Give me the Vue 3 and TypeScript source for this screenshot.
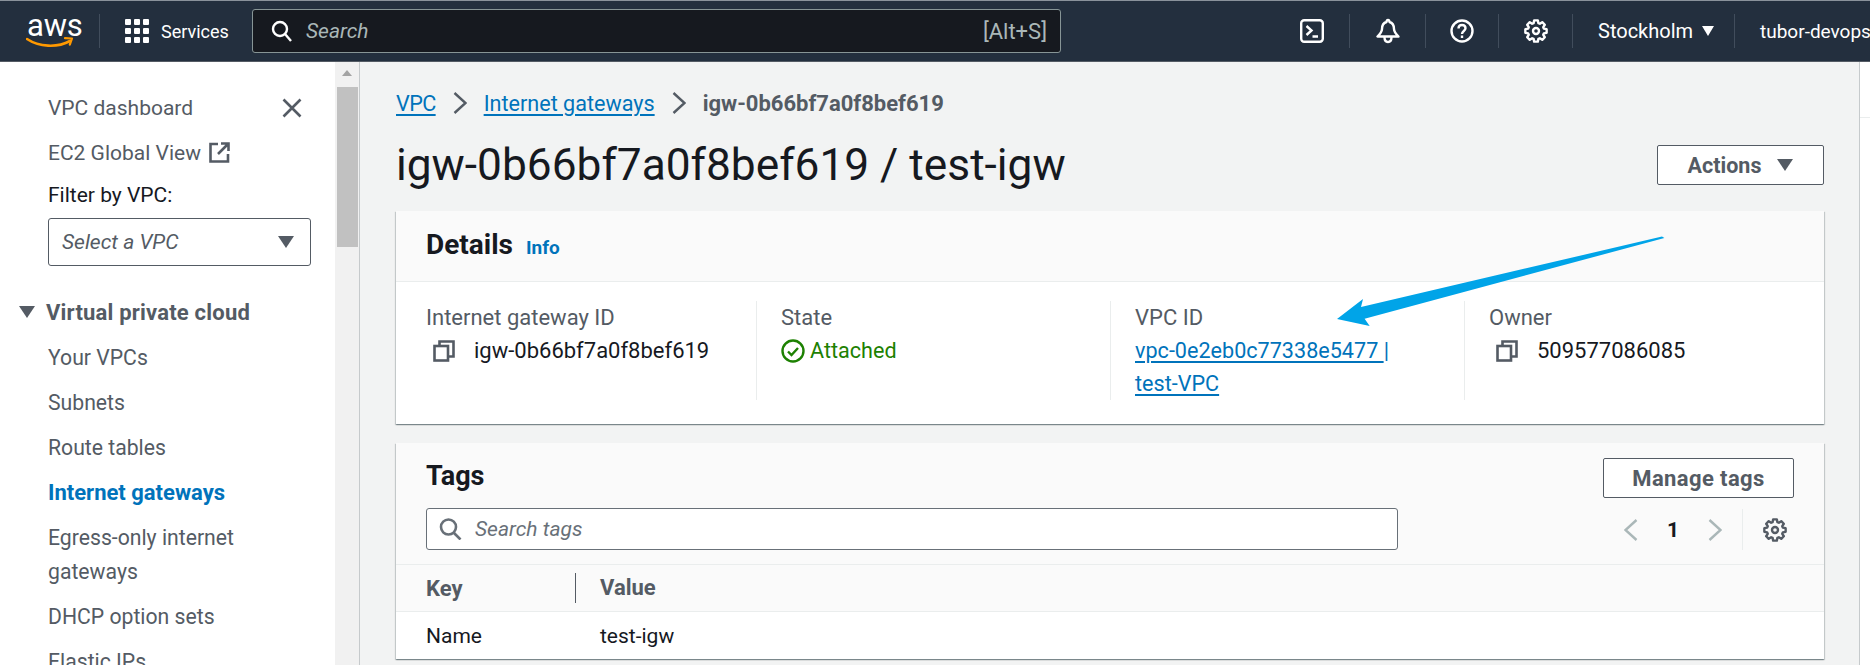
<template>
  <div class="page">
    <header class="nav">
      <div class="logo">
        <span class="logo-text">aws</span>
        <svg class="smile" width="48" height="12" viewBox="0 0 48 12" fill="none">
          <path d="M1 2c12 8 30 9 43 2" stroke="#ff9900" stroke-width="2.6" stroke-linecap="round" />
          <path d="M39 1.200l7 .3-2.200 6.200" stroke="#ff9900" stroke-width="2.200" stroke-linecap="round" stroke-linejoin="round" />
        </svg>
      </div>
      <i class="nav-div"></i>
      <div class="services">
        <svg width="24" height="24" viewBox="0 0 24 24" fill="#fff">
          <template v-for="y in [0, 9, 18]" :key="y">
            <rect v-for="x in [0, 9, 18]" :key="x" :x="x" :y="y" width="6" height="6" rx="1" />
          </template>
        </svg>
        <span>Services</span>
      </div>
      <div class="search">
        <svg width="22" height="22" viewBox="0 0 22 22" fill="none" stroke="#fff" stroke-width="2.400">
          <circle cx="9" cy="9" r="7" />
          <path d="M14 14l6 7" />
        </svg>
        <span class="search-ph">Search</span>
        <span class="search-key">[Alt+S]</span>
      </div>
      <div class="nav-icon ic-term">
        <svg width="24" height="24" viewBox="0 0 24 24" fill="none" stroke="#fff" stroke-width="2.400">
          <rect x="1.200" y="1.200" width="21.600" height="21.600" rx="3" />
          <path d="M6.500 7l5 4.500-5 4.500M12.500 17.500h5.500" />
        </svg>
      </div>
      <i class="nav-div"></i>
      <div class="nav-icon ic-bell">
        <svg width="24" height="26" viewBox="0 0 24 26" fill="none" stroke="#fff" stroke-width="2.400" stroke-linejoin="round">
          <path d="M12 2c-1 0-1.400 1-1.500 2C7 5 6 8 6 11c0 3-2 5-4.500 7.500h21C20 16 18 14 18 11c0-3-1-6-4.500-7C13.400 3 13 2 12 2z" />
          <path d="M8.500 19c0 3 1.500 5 3.500 5s3.500-2 3.500-5" />
        </svg>
      </div>
      <i class="nav-div"></i>
      <div class="nav-icon ic-help">
        <svg width="24" height="24" viewBox="0 0 24 24" fill="none" stroke="#fff" stroke-width="2.400">
          <circle cx="12" cy="12" r="10.500" />
          <path d="M8.500 9.500c0-2.200 1.500-3.500 3.500-3.500s3.500 1.300 3.500 3.300c0 2.700-3.500 2.700-3.500 5.700" />
          <path d="M12 16.500v2.500" />
        </svg>
      </div>
      <i class="nav-div"></i>
      <div class="nav-icon">
        <svg width="24" height="24" viewBox="0 0 24 24" fill="none" stroke="#fff" stroke-width="2.400" stroke-linejoin="round">
          <path :d="gearPath" />
          <circle cx="12" cy="12" r="3" />
        </svg>
      </div>
      <i class="nav-div"></i>
      <div class="region">
        <span>Stockholm</span>
        <i class="caret caret-white"></i>
      </div>
      <i class="nav-div"></i>
      <span class="account">tubor-devops</span>
    </header>

    <div class="body">
      <aside class="side">
        <div class="side-row">
          <span>VPC dashboard</span>
          <svg class="side-close" width="20" height="20" viewBox="0 0 20 20" stroke="#545b64" stroke-width="2.600">
            <path d="M1.500 1.500l17 17M18.500 1.500l-17 17" />
          </svg>
        </div>
        <div class="side-row">
          <span>EC2 Global View</span>
          <svg class="ext" width="21" height="21" viewBox="0 0 21 21" fill="none" stroke="#545b64" stroke-width="2.600">
            <path d="M9 2H1.500v17.500H19V12M12 1.500h7.500V9M19 2L9 12" />
          </svg>
        </div>
        <div class="filter-label">Filter by VPC:</div>
        <div class="select">
          <span>Select a VPC</span>
          <i class="caret"></i>
        </div>
        <div class="side-group">
          <i class="caret"></i>
          <span>Virtual private cloud</span>
        </div>
        <ul class="side-list">
          <li v-for="item in sideItems" :key="item" :class="{ active: item === 'Internet gateways' }">{{ item }}</li>
        </ul>
      </aside>

      <div class="scrollbar">
        <i class="scroll-up"></i>
        <div class="scroll-thumb"></div>
      </div>

      <main class="main">
        <nav class="crumbs">
          <a class="crumb-vpc">VPC</a>
          <svg width="14" height="22" viewBox="0 0 14 22" fill="none" stroke="#545b64" stroke-width="2.400"><path d="M1.500 1l11 10-11 10" /></svg>
          <a>Internet gateways</a>
          <svg width="14" height="22" viewBox="0 0 14 22" fill="none" stroke="#545b64" stroke-width="2.400"><path d="M1.500 1l11 10-11 10" /></svg>
          <b>igw-0b66bf7a0f8bef619</b>
        </nav>

        <div class="title-row">
          <h1>igw-0b66bf7a0f8bef619 / test-igw</h1>
          <button class="btn btn-actions">Actions <i class="caret"></i></button>
        </div>

        <section class="card">
          <div class="card-head">
            <h2 class="h-details">Details</h2>
            <a class="info">Info</a>
          </div>
          <div class="details">
            <div class="col">
              <div class="lbl">Internet gateway ID</div>
              <div class="val">
                <svg class="copy" width="22" height="22" viewBox="0 0 22 22" fill="none" stroke="#545b64" stroke-width="2.600">
                  <path d="M6.500 6V1.500h14v15H15" />
                  <rect x="1.500" y="6" width="13.500" height="14.500" />
                </svg>
                <span>igw-0b66bf7a0f8bef619</span>
              </div>
            </div>
            <div class="col">
              <div class="lbl">State</div>
              <div class="val val-ok">
                <svg width="24" height="24" viewBox="0 0 24 24" fill="none" stroke="#1d8102" stroke-width="2.400">
                  <circle cx="12" cy="12" r="10.500" />
                  <path d="M7 12.500l3.500 3.500 6.500-7" />
                </svg>
                <span>Attached</span>
              </div>
            </div>
            <div class="col">
              <div class="lbl">VPC ID</div>
              <div class="val-link"><a>vpc-0e2eb0c77338e5477 </a> |<br /><a>test-VPC</a></div>
            </div>
            <div class="col">
              <div class="lbl">Owner</div>
              <div class="val">
                <svg class="copy" width="22" height="22" viewBox="0 0 22 22" fill="none" stroke="#545b64" stroke-width="2.600">
                  <path d="M6.500 6V1.500h14v15H15" />
                  <rect x="1.500" y="6" width="13.500" height="14.500" />
                </svg>
                <span>509577086085</span>
              </div>
            </div>
          </div>
          <svg class="arrow" width="340" height="100" viewBox="0 0 340 100">
            <path d="M7 88L33 68 31 76 332 5.500 334.400 7 34.600 87.700 39.700 95z" fill="#00a4e8" />
          </svg>
        </section>

        <section class="card card-tags">
          <div class="tags-top">
            <div class="tags-left">
              <h2>Tags</h2>
              <div class="tag-search">
                <svg width="23" height="22" viewBox="0 0 23 22" fill="none" stroke="#687078" stroke-width="2.600">
                  <circle cx="9.500" cy="9" r="7.500" />
                  <path d="M15 15l6.500 6.500" />
                </svg>
                <span>Search tags</span>
              </div>
            </div>
            <div class="tags-right">
              <button class="btn btn-manage">Manage tags</button>
              <div class="pager">
                <svg width="14" height="22" viewBox="0 0 14 22" fill="none" stroke="#aab7b8" stroke-width="2.400"><path d="M12.500 1l-11 10 11 10" /></svg>
                <b>1</b>
                <svg width="14" height="22" viewBox="0 0 14 22" fill="none" stroke="#aab7b8" stroke-width="2.400"><path d="M1.500 1l11 10-11 10" /></svg>
                <i class="pager-div"></i>
                <svg width="24" height="24" viewBox="0 0 24 24" fill="none" stroke="#545b64" stroke-width="2.400" stroke-linejoin="round">
                  <path :d="gearPath" />
                  <circle cx="12" cy="12" r="3" />
                </svg>
              </div>
            </div>
          </div>
          <div class="t-head">
            <span class="t-key">Key</span>
            <span class="t-val">Value</span>
          </div>
          <div class="t-row">
            <span class="t-key">Name</span>
            <span class="t-val">test-igw</span>
          </div>
        </section>
      </main>

      <div class="right-strip"><i></i></div>
    </div>
  </div>
</template>

<script setup lang="ts">
const sideItems: string[] = [
  'Your VPCs',
  'Subnets',
  'Route tables',
  'Internet gateways',
  'Egress-only internet gateways',
  'DHCP option sets',
  'Elastic IPs',
];

// 8-tooth gear outline shared by the nav bar and the table preferences
function makeGear(): string {
  const pts: string[] = [];
  const teeth = 8;
  for (let i = 0; i < teeth; i++) {
    const a = (i / teeth) * Math.PI * 2;
    const offsets: [number, number][] = [
      [-0.3, 8.2],
      [-0.17, 10.8],
      [0.17, 10.8],
      [0.3, 8.2],
    ];
    for (const [da, r] of offsets) {
      const x = 12 + r * Math.cos(a + da);
      const y = 12 + r * Math.sin(a + da);
      pts.push(`${x.toFixed(2)} ${y.toFixed(2)}`);
    }
  }
  return `M${pts.join('L')}Z`;
}

const gearPath = makeGear();
</script>

<style>
html,
body {
  margin: 0;
  background: #fff;
  overflow: hidden;
}
</style>

<style scoped>
.page {
  width: 1870px;
  height: 665px;
  overflow: hidden;
  font-family: Roboto, 'Noto Sans', sans-serif;
  font-size: 21px;
  color: #16191f;
  display: flex;
  flex-direction: column;
}
a {
  color: #0073bb;
  text-decoration: underline;
  text-underline-offset: 3px;
}
i {
  display: block;
  font-style: normal;
}

/* top bar */
.nav {
  height: 62px;
  flex: none;
  box-sizing: border-box;
  background: #232f3e;
  border-top: 1px solid #8a929b;
  border-bottom: 1px solid #545b64;
  display: flex;
  align-items: center;
  color: #fff;
  font-size: 19px;
}
.nav > * {
  flex: none;
}
.logo {
  width: 46px;
  margin-left: 27px;
  margin-right: 26px;
  height: 34px;
  position: relative;
}
.logo-text {
  display: block;
  font-size: 31px;
  line-height: 24px;
  letter-spacing: -0.2px;
  text-align: center;
}
.smile {
  position: absolute;
  left: -1px;
  top: 23px;
}
.nav-div {
  width: 1px;
  height: 34px;
  background: #414d5c;
}
.services {
  display: flex;
  align-items: center;
  gap: 12px;
  margin-left: 25px;
  width: 127px;
  font-size: 18px;
}
.search {
  width: 809px;
  height: 44px;
  box-sizing: border-box;
  background: #16191f;
  border: 1px solid #879596;
  border-radius: 3px;
  display: flex;
  align-items: center;
  padding: 0 13px 0 18px;
}
.search-ph {
  font-style: italic;
  color: #aab7b8;
  margin-left: 13px;
  font-size: 21px;
}
.search-key {
  margin-left: auto;
  color: #aab7b8;
  font-size: 22px;
}
.nav-icon {
  width: 73px;
  display: flex;
  justify-content: center;
}
.ic-term {
  width: 74px;
  margin-left: 214px;
}
.ic-bell {
  width: 75px;
}
.ic-help {
  width: 72px;
}
.region {
  display: flex;
  align-items: center;
  gap: 9px;
  padding-left: 25px;
  width: 161px;
  box-sizing: border-box;
  font-size: 20px;
}
.account {
  margin-left: 25px;
  white-space: nowrap;
}
.caret {
  width: 0;
  height: 0;
  border-left: 8px solid transparent;
  border-right: 8px solid transparent;
  border-top: 12px solid #545b64;
  flex: none;
}
.caret-white {
  border-left-width: 6px;
  border-right-width: 6px;
  border-top: 10px solid #fff;
}

.body {
  flex: 1;
  display: flex;
  min-height: 0;
}

/* side navigation */
.side {
  width: 335px;
  flex: none;
  box-sizing: border-box;
  padding: 23px 24px 0 48px;
  color: #545b64;
  background: #fff;
}
.side-row {
  height: 45px;
  display: flex;
  align-items: center;
  white-space: nowrap;
}
.side-close {
  margin-left: auto;
  margin-right: 9px;
}
.ext {
  margin-left: 8px;
}
.filter-label {
  height: 40px;
  line-height: 40px;
  color: #16191f;
}
.select {
  width: 263px;
  height: 48px;
  margin-top: 3px;
  box-sizing: border-box;
  border: 1px solid #545b64;
  border-radius: 3px;
  display: flex;
  align-items: center;
  justify-content: space-between;
  padding: 0 16px 0 13px;
  font-style: italic;
}
.side-group {
  display: flex;
  align-items: center;
  gap: 11px;
  margin: 29px 0 0 -29px;
  font-weight: 700;
  font-size: 22px;
  letter-spacing: 0.2px;
  height: 34px;
  white-space: nowrap;
}
.side-list {
  list-style: none;
  margin: 12px 0 0;
  padding: 0;
  display: flex;
  flex-direction: column;
  gap: 11px;
  line-height: 34px;
  font-size: 21.200px;
}
.side-list .active {
  color: #0073bb;
  font-weight: 700;
  font-size: 22px;
}

.scrollbar {
  width: 25px;
  flex: none;
  background: #f1f1f1;
  border-right: 1px solid #c6cacc;
  box-sizing: border-box;
  padding: 8px 2px 0;
  display: flex;
  flex-direction: column;
  align-items: center;
}
.scroll-up {
  width: 0;
  height: 0;
  border-left: 5px solid transparent;
  border-right: 5px solid transparent;
  border-bottom: 6px solid #a3a3a3;
}
.scroll-thumb {
  width: 21px;
  height: 160px;
  background: #c1c1c1;
  margin-top: 11px;
}

/* main content */
.main {
  width: 1500px;
  flex: none;
  box-sizing: border-box;
  background: #f2f3f3;
  border-right: 1px solid #c6cacc;
  padding: 0 35px 0 36px;
}
.crumbs {
  height: 82px;
  display: flex;
  align-items: center;
  font-size: 21.600px;
}
.crumb-vpc {
  letter-spacing: -0.6px;
}
.crumbs svg {
  margin: 0 17px;
}
.crumbs b {
  color: #545b64;
  font-size: 22px;
}
.title-row {
  display: flex;
  align-items: center;
  justify-content: space-between;
  height: 42px;
}
h1 {
  margin: 0;
  font-size: 44.250px;
  font-weight: 400;
  white-space: nowrap;
}
h2 {
  margin: 0;
  font-size: 27px;
  font-weight: 700;
}
.btn {
  height: 40px;
  box-sizing: border-box;
  border: 1px solid #545b64;
  border-radius: 2px;
  background: #fff;
  color: #545b64;
  font: 700 21.500px Roboto, 'Noto Sans', sans-serif;
  display: flex;
  align-items: center;
  justify-content: center;
}
.btn-actions {
  width: 167px;
  gap: 16px;
}
.btn-manage {
  width: 191px;
  font-size: 22px;
  letter-spacing: 0.4px;
}
.card {
  position: relative;
  background: #fff;
  box-shadow: 0 1px 1px 0 rgba(0, 28, 36, 0.3), 1px 1px 1px 0 rgba(0, 28, 36, 0.15), -1px 1px 1px 0 rgba(0, 28, 36, 0.15);
  margin-top: 25px;
  height: 213px;
}
.card-head {
  height: 71px;
  box-sizing: border-box;
  background: #fafafa;
  border-bottom: 1px solid #eaeded;
  display: flex;
  align-items: center;
  padding: 0 0 4px 30px;
  gap: 13px;
}
.h-details {
  font-size: 28px;
}
.info {
  font-size: 19px;
  font-weight: 700;
  text-decoration: none;
  margin-top: 6px;
}
.details {
  display: grid;
  grid-template-columns: repeat(4, 354px);
  padding: 19px 0 0 6px;
  font-size: 22px;
}
.col {
  height: 99px;
  box-sizing: border-box;
  padding-left: 24px;
  border-left: 1px solid #eaeded;
}
.col:first-child {
  border-left: 0;
  padding-left: 25px;
  margin-left: -1px;
}
.lbl {
  color: #545b64;
  height: 33px;
  line-height: 33px;
}
.val {
  display: flex;
  align-items: center;
  height: 33px;
}
.copy {
  margin: 0 19px 0 7px;
}
.val-ok {
  color: #1d8102;
  gap: 5px;
  font-size: 21.600px;
}
.val-link {
  line-height: 33px;
  color: #0073bb;
  font-size: 21.600px;
}
.arrow {
  position: absolute;
  left: 934px;
  top: 20px;
}
.card-tags {
  margin-top: 19px;
  height: 216px;
}
.tags-top {
  height: 122px;
  background: #fafafa;
  border-bottom: 1px solid #eaeded;
  box-sizing: border-box;
  display: flex;
  justify-content: space-between;
  padding: 15px 30px 0 30px;
}
.tags-left {
  width: 972px;
}
.tags-left h2 {
  line-height: 36px;
}
.tag-search {
  margin-top: 14px;
  height: 42px;
  box-sizing: border-box;
  background: #fff;
  border: 1px solid #687078;
  border-radius: 3px;
  display: flex;
  align-items: center;
  padding-left: 12px;
  gap: 13px;
  color: #687078;
  font-style: italic;
}
.tags-right {
  display: flex;
  flex-direction: column;
  align-items: flex-end;
}
.pager {
  display: flex;
  align-items: center;
  margin: 11px 7px 0 0;
  height: 41px;
}
.pager b {
  width: 70px;
  text-align: center;
}
.pager-div {
  width: 1px;
  height: 41px;
  background: #eaeded;
  margin: 0 20px;
}
.t-head,
.t-row {
  display: flex;
  align-items: center;
  box-sizing: border-box;
  padding-left: 30px;
}
.t-head {
  height: 47px;
  background: #fafafa;
  border-bottom: 1px solid #eaeded;
  color: #545b64;
  font-weight: 700;
  font-size: 22px;
}
.t-key {
  width: 149px;
  flex: none;
}
.t-val {
  padding-left: 25px;
}
.t-head .t-val {
  padding-left: 24px;
  border-left: 1px solid #545b64;
  height: 30px;
  line-height: 30px;
}
.t-row {
  height: 47px;
}
.right-strip {
  flex: 1;
  background: #fff;
}
.right-strip i {
  height: 55px;
  border-bottom: 1px solid #eaeded;
}
</style>
